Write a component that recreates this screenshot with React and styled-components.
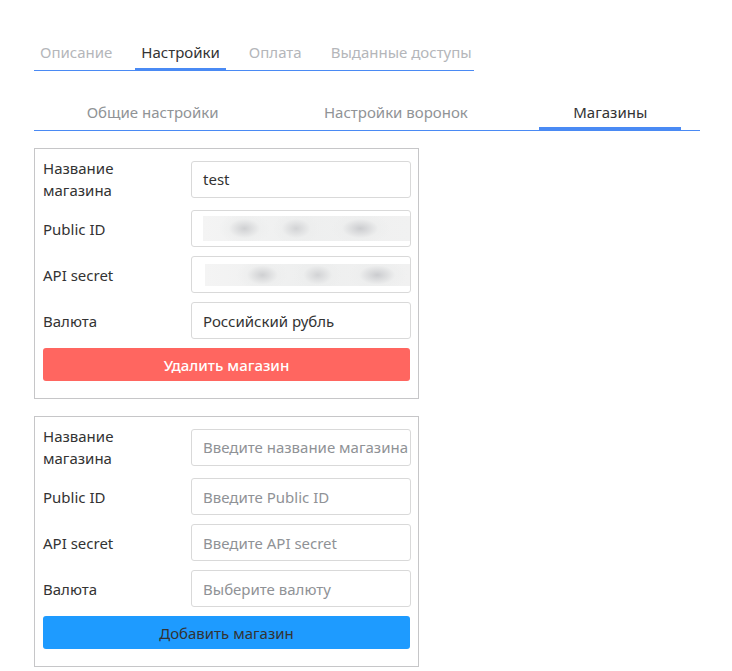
import React from 'react'
import styled, { createGlobalStyle } from 'styled-components'

const GlobalStyle = createGlobalStyle`
  body {
    margin: 0;
    background: #fff;
    font-family: "Noto Sans", "Open Sans", sans-serif;
    color: #333;
  }
`

const Page = styled.div`
  padding: 34px 32px 0 34px;
  width: 666px;
`

const MainTabs = styled.div`
  display: flex;
  width: 440px;
  border-bottom: 1px solid #4a8af4;
  white-space: nowrap;
`

const MainTab = styled.div`
  font-size: 15px;
  line-height: 20px;
  padding: 8px 6px 6px;
  margin-right: 17px;
  color: ${p => (p.active ? '#333' : '#b4b6ba')};
  border-bottom: 3px solid ${p => (p.active ? '#4a8af4' : 'transparent')};
  margin-bottom: -1px;
  flex-shrink: 0;
`

const SubTabs = styled.div`
  display: flex;
  justify-content: space-around;
  margin-top: 23px;
  border-bottom: 1px solid #4a8af4;
`

const SubTab = styled.div`
  font-size: 15px;
  line-height: 20px;
  padding: 8px 34px 5px;
  color: ${p => (p.active ? '#333' : '#909396')};
  border-bottom: 3px solid ${p => (p.active ? '#4a8af4' : 'transparent')};
  white-space: nowrap;
`

const Card = styled.div`
  width: 367px;
  margin-top: 17px;
  border: 1px solid #c6c6c8;
  padding: 8px 8px 17px;
  display: flex;
  flex-direction: column;
`

const Row = styled.div`
  display: grid;
  grid-template-columns: 148px 220px;
  align-items: center;
  margin-bottom: 9px;
`

const Label = styled.div`
  font-size: 15px;
  line-height: 22px;
  color: #333;
  max-width: 110px;
`

const Field = styled.div`
  height: 37px;
  box-sizing: border-box;
  border: 1px solid #d9d9d9;
  border-radius: 3px;
  padding: 0 11px;
  display: flex;
  align-items: center;
  font-size: 15px;
  color: ${p => (p.placeholder ? '#8f9296' : '#333')};
  white-space: nowrap;
  overflow: hidden;
`

// blurred (hidden) credential value
const Hidden = styled.div`
  height: ${p => p.h}px;
  margin: 0 -11px 0 ${p => p.shift}px;
  flex: 1;
  background:
    radial-gradient(ellipse 26px 16px at ${p => p.spots[0]}% 50%, #cfd0d2 0%, rgba(236, 237, 237, 0.6) 60%, rgba(238, 239, 239, 0) 100%),
    radial-gradient(ellipse 24px 16px at ${p => p.spots[1]}% 50%, #d2d3d5 0%, rgba(236, 237, 237, 0.6) 60%, rgba(238, 239, 239, 0) 100%),
    radial-gradient(ellipse 30px 16px at ${p => p.spots[2]}% 50%, #cbcccf 0%, rgba(236, 237, 237, 0.6) 60%, rgba(238, 239, 239, 0) 100%),
    linear-gradient(90deg, #f4f4f4, #eeefef 50%, #f1f1f1);
`

const Button = styled.div`
  height: 33px;
  border-radius: 3px;
  background: ${p => p.bg};
  color: ${p => p.fg};
  font-size: 15px;
  font-weight: ${p => p.weight};
  display: flex;
  align-items: center;
  justify-content: center;
`

const App = () => (
  <Page>
    <GlobalStyle />
    <MainTabs>
      <MainTab>Описание</MainTab>
      <MainTab active>Настройки</MainTab>
      <MainTab>Оплата</MainTab>
      <MainTab>Выданные доступы</MainTab>
    </MainTabs>
    <SubTabs>
      <SubTab>Общие настройки</SubTab>
      <SubTab>Настройки воронок</SubTab>
      <SubTab active>Магазины</SubTab>
    </SubTabs>

    <Card>
      <Row>
        <Label>Название магазина</Label>
        <Field>test</Field>
      </Row>
      <Row>
        <Label>Public ID</Label>
        <Field><Hidden shift={0} h={25} spots={[20, 45, 76]} /></Field>
      </Row>
      <Row>
        <Label>API secret</Label>
        <Field><Hidden shift={2} h={22} spots={[28, 55, 84]} /></Field>
      </Row>
      <Row>
        <Label>Валюта</Label>
        <Field>Российский рубль</Field>
      </Row>
      <Button bg="#ff6660" fg="#fff" weight={500}>Удалить магазин</Button>
    </Card>

    <Card>
      <Row>
        <Label>Название магазина</Label>
        <Field placeholder>Введите название магазина</Field>
      </Row>
      <Row>
        <Label>Public ID</Label>
        <Field placeholder>Введите Public ID</Field>
      </Row>
      <Row>
        <Label>API secret</Label>
        <Field placeholder>Введите API secret</Field>
      </Row>
      <Row>
        <Label>Валюта</Label>
        <Field placeholder>Выберите валюту</Field>
      </Row>
      <Button bg="#1e9bff" fg="#333" weight={400}>Добавить магазин</Button>
    </Card>
  </Page>
)

export default App
